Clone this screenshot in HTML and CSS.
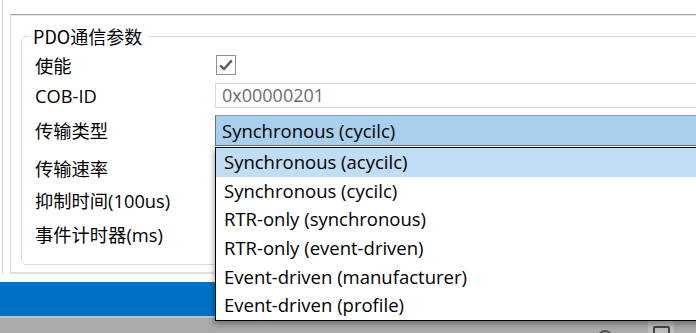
FILE: index.html
```html
<!DOCTYPE html>
<html lang="zh-CN">
<head>
<meta charset="utf-8">
<title>PDO通信参数</title>
<link rel="stylesheet" href="styles.css">
</head>
<body>
<div class="app">
  <div class="frame">
    <div class="panel">
      <fieldset class="group">
        <legend>PDO通信参数</legend>
        <div class="form">
          <div class="label">使能</div>
          <div class="field"><span class="check"><svg width="14" height="12" viewBox="0 0 14 12"><path d="M1.2 6.4 L5 10 L12.8 1.4" fill="none" stroke="#5f5f5f" stroke-width="2.4"/></svg></span></div>
          <div class="label">COB-ID</div>
          <div class="field"><div class="textbox">0x00000201</div></div>
          <div class="label">传输类型</div>
          <div class="field">
            <div class="combo">
              <span class="combo-text">Synchronous (cycilc)</span>
              <ul class="list">
                <li class="item selected">Synchronous (acycilc)</li>
                <li class="item">Synchronous (cycilc)</li>
                <li class="item">RTR-only (synchronous)</li>
                <li class="item">RTR-only (event-driven)</li>
                <li class="item">Event-driven (manufacturer)</li>
                <li class="item">Event-driven (profile)</li>
              </ul>
            </div>
          </div>
          <div class="label">传输速率</div>
          <div class="field"><div class="textbox"></div></div>
          <div class="label">抑制时间(100us)</div>
          <div class="field"><div class="textbox"></div></div>
          <div class="label">事件计时器(ms)</div>
          <div class="field"><div class="textbox"></div></div>
        </div>
      </fieldset>
    </div>
  </div>
  <div class="status"></div>
  <div class="taskbar">
    <span class="tb-circle"></span>
    <span class="tb-button"><span class="tb-square"></span></span>
  </div>
</div>
</body>
</html>
```
FILE: styles.css
```css
* { box-sizing: border-box; }
html, body {
  margin: 0;
  padding: 0;
  width: 696px;
  height: 333px;
  overflow: hidden;
  background: #ffffff;
}
body {
  font-family: "Open Sans", "Noto Sans CJK SC", sans-serif;
  font-size: 18px;
  color: #000;
}
.app {
  width: 696px;
  height: 333px;
  overflow: hidden;
  display: flex;
  flex-direction: column;
}
.frame {
  height: 274px;
  margin-left: 2px;
  border-left: 1px solid #d4d4d4;
  padding: 14px 0 0 7px;
  flex: none;
}
.panel {
  height: 260px;
  margin-right: -60px;
  border-top: 1px solid #a3a3a3;
  border-left: 1px solid #dadada;
  border-bottom: 2px solid #e1e1e1;
  box-shadow: inset 0 1px 0 #e6e6e6;
  padding: 10px 0 0 10px;
}
.group {
  margin: 0;
  padding: 5px 13px 11px 13px;
  border: 1px solid #dcdcdc;
  border-radius: 5px;
  min-width: 0;
}
.group legend {
  font-family: "Noto Sans CJK SC", "Open Sans", sans-serif;
  font-size: 18px;
  line-height: 22px;
  padding: 0 6px 0 3px;
  margin-left: -5px;
  color: #000;
}
.form {
  display: grid;
  grid-template-columns: 180px 1fr;
  grid-template-rows: 27px 25px 37px 32px 24px 36px;
  row-gap: 4px;
  align-items: center;
}
.label {
  line-height: 22px;
  font-size: 18.3px;
  white-space: nowrap;
}
.field { height: 100%; display: flex; align-items: center; }
.check {
  width: 20px;
  height: 20px;
  border: 1px solid #8f8f8f;
  background: #fdfdfd;
  display: flex;
  align-items: center;
  justify-content: center;
  margin: -2px 0 0 1px;
}
.textbox {
  width: 100%;
  height: 25px;
  border: 1px solid #d9d9d9;
  color: #6d6d6d;
  padding: 0 6px;
  line-height: 23px;
  font-size: 18px;
}
.combo {
  position: relative;
  width: 100%;
  height: 31px;
  background: #a8cfee;
  border: 1px solid #3f7fb5;
  border-top-color: #6d9fcd;
  padding: 0 6px;
  line-height: 29px;
  font-size: 18.5px;
}
.list {
  position: absolute;
  top: 31px;
  left: -1px;
  right: -1px;
  margin: 0;
  padding: 0;
  list-style: none;
  background: #ffffff;
  border: 1px solid #000;
  box-shadow: -1px 3px 6px rgba(0, 0, 0, 0.35);
  z-index: 5;
}
.item {
  height: 28.67px;
  line-height: 28.67px;
  padding-left: 8px;
  white-space: nowrap;
}
.item.selected { background: #c0ddf3; }
.status {
  margin-top: 8px;
  height: 34px;
  background: #0072c6;
  flex: none;
}
.taskbar {
  flex: 1;
  background: #a7aba9;
  border-top: 2px solid #c3c3c3;
  position: relative;
  display: flex;
  align-items: flex-start;
}
.tb-circle {
  margin: 12px 0 0 598px;
  width: 14px;
  height: 14px;
  border: 2px solid #4c4c4c;
  border-radius: 50%;
}
.tb-button {
  margin-left: 36px;
  width: 26px;
  height: 15px;
  background: #b9bdbb;
  display: flex;
  justify-content: center;
  padding-top: 8px;
}
.tb-square {
  width: 17px;
  height: 12px;
  border: 2px solid #444;
  border-radius: 2px;
}
```
